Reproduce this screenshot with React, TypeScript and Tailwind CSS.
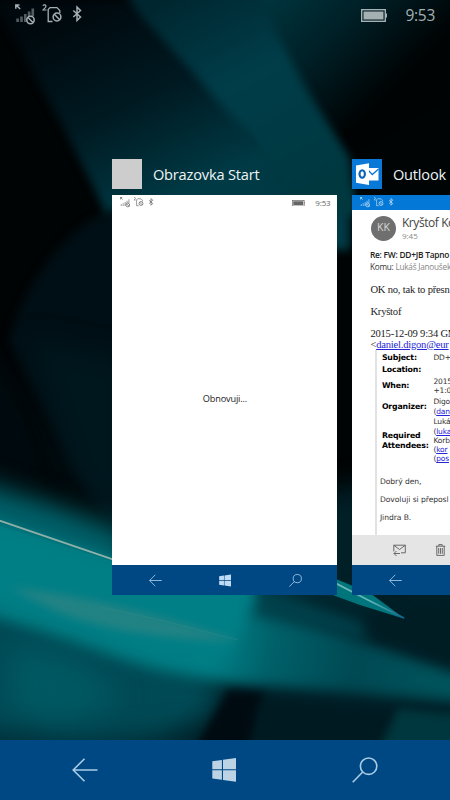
import type { ReactNode } from "react";
import { clsx } from "clsx";

/** Dark teal light-beam wallpaper behind the task switcher. */
function Wallpaper() {
  return (
    <svg
      className="absolute inset-0 h-full w-full"
      viewBox="0 0 450 800"
      preserveAspectRatio="none"
      aria-hidden
    >
      <defs>
        <filter id="b1" x="-20%" y="-20%" width="140%" height="140%" colorInterpolationFilters="sRGB">
          <feGaussianBlur stdDeviation="0.7" />
        </filter>
        <filter id="b4" x="-30%" y="-30%" width="160%" height="160%" colorInterpolationFilters="sRGB">
          <feGaussianBlur stdDeviation="4" />
        </filter>
        <filter id="b7" x="-40%" y="-40%" width="180%" height="180%" colorInterpolationFilters="sRGB">
          <feGaussianBlur stdDeviation="7" />
        </filter>
        <filter id="b12" x="-50%" y="-50%" width="200%" height="200%" colorInterpolationFilters="sRGB">
          <feGaussianBlur stdDeviation="13" />
        </filter>
        <linearGradient id="leftBeam" gradientUnits="userSpaceOnUse" x1="60" y1="20" x2="150" y2="210">
          <stop offset="0" stopColor="#00090e" />
          <stop offset="0.5" stopColor="#001921" />
          <stop offset="1" stopColor="#003a45" />
        </linearGradient>
        <linearGradient id="mainBeam" gradientUnits="userSpaceOnUse" x1="180" y1="-10" x2="290" y2="200">
          <stop offset="0" stopColor="#00262f" />
          <stop offset="0.45" stopColor="#003d49" />
          <stop offset="1" stopColor="#003840" />
        </linearGradient>
        <linearGradient id="topRight" gradientUnits="userSpaceOnUse" x1="260" y1="0" x2="370" y2="110">
          <stop offset="0" stopColor="#00363f" />
          <stop offset="0.5" stopColor="#001f26" />
          <stop offset="1" stopColor="#000304" />
        </linearGradient>
        <linearGradient id="sweep" gradientUnits="userSpaceOnUse" x1="0" y1="560" x2="450" y2="660">
          <stop offset="0" stopColor="#00797f" />
          <stop offset="0.5" stopColor="#007e85" />
          <stop offset="0.62" stopColor="#006069" />
          <stop offset="0.8" stopColor="#004953" />
          <stop offset="1" stopColor="#00545c" />
        </linearGradient>
        <linearGradient id="streak" x1="0" y1="0" x2="1" y2="0">
          <stop offset="0" stopColor="#8cada6" />
          <stop offset="0.6" stopColor="#8db9b0" />
          <stop offset="0.92" stopColor="#5fb5b8" />
          <stop offset="1" stopColor="#0d5f8c" />
        </linearGradient>
      </defs>

      <rect width="450" height="800" fill="#000405" />
      <path d="M225 -30H480V60L330 150Z" fill="url(#topRight)" filter="url(#b7)" />
      <path d="M-5 0H150L262 150L350 190V250H122L95 190L62 125L10 30Z" fill="url(#leftBeam)" filter="url(#b4)" />
      <path d="M110 -30H250L276 32L310 95L350 158L356 215H290L250 140L195 75L140 15Z" fill="url(#mainBeam)" filter="url(#b4)" />

      {/* curved pane on the left, above the bright sweep */}
      <path d="M-30 380L5 350L45 420L75 480L-30 500Z" fill="#00090d" filter="url(#b12)" />
      <path d="M125 207C80 213 30 270 8 340L40 400L75 470L120 530Z" fill="#000f15" filter="url(#b4)" />
      <path d="M30 340L130 360V540L75 480Z" fill="#00171e" filter="url(#b12)" />

      {/* lower right shade */}
      <path d="M325 490L480 470V780H170L260 590Z" fill="#001f27" filter="url(#b12)" />

      {/* bright sweep, widest on the left */}
      <path d="M-40 476L60 506L130 534V600L-40 640Z" fill="#00616a" filter="url(#b12)" />
      <path d="M-40 590L100 630L225 676L215 715L150 760L-40 780Z" fill="#004a55" filter="url(#b12)" />
      <path
        d="M-20 518L112 561L258 588L280 610L360 640L465 676V702C400 697 310 689 250 685C190 680 150 670 100 652L-20 612Z"
        fill="url(#sweep)"
        filter="url(#b7)"
      />
      <path d="M-20 520L112 563L258 588L228 655L150 646L-20 595Z" fill="#007f86" filter="url(#b7)" />
      <path d="M-20 520L112 561V600L-20 570Z" fill="#007f85" filter="url(#b1)" opacity="0.7" />
      <path d="M10 650C60 645 90 665 120 700L60 725L10 710Z" fill="#005862" filter="url(#b12)" />
      <path d="M-30 728L80 742L200 730V780H-30Z" fill="#002d37" filter="url(#b12)" />
      <path d="M228 690L264 693L250 760H188Z" fill="#000b11" filter="url(#b4)" />
      <path d="M262 699L450 716V760H248Z" fill="#001a21" filter="url(#b7)" />
      <path d="M398 708L470 716V760H374Z" fill="#00363d" filter="url(#b4)" />
      <path d="M262 588L350 590L380 616L365 640L252 616Z" fill="#00414b" filter="url(#b7)" />
      <path d="M272 590L335 592L400 614L440 652L365 624Z" fill="#002129" filter="url(#b7)" />
      <path d="M366 612L470 600V668L365 634Z" fill="#001d24" filter="url(#b7)" />

      {/* soft grey reflection */}
      <path d="M10 588C70 592 150 612 240 641C170 641 90 628 52 609Z" fill="#3a8582" opacity="0.6" filter="url(#b4)" />
      <path d="M100 607L160 620L238 640" fill="none" stroke="#4b8f8b" strokeWidth="1.200" opacity="0.25" filter="url(#b1)" />

      {/* thin white edge */}
      <path d="M336 579L370 593L405 619L360 605L330 594Z" fill="#00757b" filter="url(#b1)" />
      <path d="M-5 519L112 559L230 572L337 584L368 600L404 618" fill="none" stroke="url(#streak)" strokeWidth="1.800" filter="url(#b1)" />
    </svg>
  );
}

function StatusIcons({ className }: { className?: string }) {
  return (
    <svg className={className} viewBox="0 0 72 26" fill="none" stroke="currentColor" aria-hidden>
      {/* signal with roaming arrow */}
      <path d="M0.800 4.800V0.900H4.500M1 1L5.200 5" strokeWidth="1.500" />
      <g fill="currentColor" stroke="none" opacity="0.5">
        <rect x="1.300" y="14.500" width="2.600" height="3.500" />
        <rect x="5.200" y="12.500" width="2.600" height="5.500" />
        <rect x="9" y="10" width="2.600" height="8" />
        <rect x="12.800" y="7.500" width="2.600" height="4.500" />
        <rect x="16.500" y="4.500" width="2.600" height="7.500" />
      </g>
      <circle cx="15.500" cy="16" r="3.700" strokeWidth="1.500" />
      <path d="M13 13.500L18 18.500" strokeWidth="1.500" />
      {/* second sim slot */}
      <path d="M37.500 17.500H33.200V5.500L35 3.600H42L44.800 6.500V9" strokeWidth="1.300" />
      <circle cx="42" cy="13" r="3.900" strokeWidth="1.500" />
      <path d="M39.300 10.300L44.700 15.700" strokeWidth="1.500" />
      {/* sim number */}
      <path d="M28 1.800C28.500 0.400 31.300 0.600 30.900 2.600C30.600 3.800 28.800 4.800 28 6H31.500" strokeWidth="1.200" />
      {/* bluetooth */}
      <path d="M58.300 6.500L65.500 13L62 16.500V3L65.500 6.500L58.300 13" strokeWidth="1.500" />
    </svg>
  );
}

function Battery({ className }: { className?: string }) {
  return (
    <svg className={className} viewBox="0 0 26 13" aria-hidden>
      <rect x="0.700" y="0.700" width="23.600" height="11.600" fill="none" stroke="currentColor" strokeWidth="1.400" />
      <rect x="2.500" y="2.500" width="20" height="8" fill="currentColor" />
      <rect x="25" y="4.500" width="1" height="4" fill="currentColor" />
    </svg>
  );
}

function BackIcon({ className }: { className?: string }) {
  return (
    <svg className={className} viewBox="0 0 26 26" fill="none" stroke="currentColor" strokeWidth="1.600" aria-hidden>
      <path d="M12.500 1.700L1.200 13L12.500 24.300M1.200 13H25.500" />
    </svg>
  );
}

function WindowsIcon({ className }: { className?: string }) {
  return (
    <svg className={className} viewBox="0 0 26 26" fill="currentColor" aria-hidden>
      <path d="M0.300 4.300L9.900 3V12.200H0.300ZM11 2.800L24 1V12.200H11ZM0.300 13.300H9.900V22.800L0.300 21.500ZM11 13.300H24V24.800L11 23Z" />
    </svg>
  );
}

function SearchIcon({ className }: { className?: string }) {
  return (
    <svg className={className} viewBox="0 0 26 26" fill="none" stroke="currentColor" strokeWidth="1.600" aria-hidden>
      <circle cx="16.600" cy="9.200" r="8.200" />
      <path d="M10.700 15L0.700 25.300" />
    </svg>
  );
}

function ThumbNav() {
  return (
    <div className="flex h-[30px] shrink-0 items-center justify-between bg-[#004883] pr-[35px] pl-[36.500px] text-[#b4d4ec]">
      <BackIcon className="h-[13px] w-[13px]" />
      <WindowsIcon className="h-[13px] w-[13px] text-[#c0dcf5]" />
      <SearchIcon className="h-[13px] w-[13px]" />
    </div>
  );
}

function AppCard({
  title,
  icon,
  statusClass,
  children,
}: {
  title: string;
  icon: ReactNode;
  statusClass: string;
  children: ReactNode;
}) {
  return (
    <section className="w-[225px] shrink-0">
      <header className="flex h-[30px] items-center">
        {icon}
        <h2 className="ml-[10.500px] pt-px text-[14.600px] tracking-[-0.180px] whitespace-nowrap text-[#edf5f6]">{title}</h2>
      </header>
      <div className="mt-1.5 flex h-[400px] flex-col overflow-hidden bg-white">
        <div className={clsx("flex h-[15px] shrink-0 items-start pt-[2px] pr-[7px] pl-2", statusClass)}>
          <StatusIcons className="h-[13px] w-9" />
          <Battery className="mt-[2.500px] ml-auto h-[6.500px] w-[13px]" />
          <span className="ml-[10px] text-[8px] leading-[12px] tracking-[-0.200px]">9:53</span>
        </div>
        {children}
        <ThumbNav />
      </div>
    </section>
  );
}

function OutlookLogo() {
  return (
    <svg className="h-[30px] w-[30px] bg-[#0a78d6]" viewBox="0 0 30 30" aria-hidden>
      <path d="M16 9H26.500V21.500H16Z" fill="#fff" />
      <path d="M16 11L20.300 15.500L26.500 10" fill="none" stroke="#0a78d6" strokeWidth="1.300" />
      <path d="M4 6.500L17 4.200V26L4 23.700Z" fill="#fff" />
      <ellipse cx="10.200" cy="15" rx="2.700" ry="3.700" fill="none" stroke="#0a63b5" strokeWidth="2.100" />
    </svg>
  );
}

function Link({ children }: { children: ReactNode }) {
  return <span className="text-[#2525d8] underline">{children}</span>;
}

function InviteRow({ label, className, children }: { label: ReactNode; className: string; children?: ReactNode }) {
  return (
    <div className={clsx("flex items-center", className)}>
      <div className="w-[51.500px] shrink-0 font-bold tracking-[-0.150px] text-black">{label}</div>
      <div className="text-[7.500px] tracking-[-0.150px] whitespace-nowrap">{children}</div>
    </div>
  );
}

function MailMessage() {
  return (
    <div className="flex min-h-0 flex-1 flex-col whitespace-nowrap">
      <div className="flex h-[35px] shrink-0 items-center pt-px pl-[18.500px]">
        <div className="flex h-[25px] w-[25px] items-center justify-center rounded-full bg-[#6f6f6f] text-[10.500px] text-[#dadada]">
          KK
        </div>
        <div className="ml-[6px]">
          <div className="text-[12px] leading-[16px] tracking-[-0.420px] text-[#444]">Kryštof Ko</div>
          <div className="text-[8px] leading-[10px] text-[#8a8a8a]">9:45</div>
        </div>
      </div>
      <div className="mt-[3.500px] pl-[17.500px] text-[8.400px] leading-[12px]">
        <div className="font-semibold tracking-[-0.250px] text-[#222]">Re: FW: DD+JB Tapno</div>
        <div className="text-[8.200px] tracking-[-0.220px] text-[#333]">
          Komu: <span className="text-[#868686]">Lukáš Janoušek</span>
        </div>
      </div>
      <div className="mt-[11.500px] pl-[18px] font-['Liberation_Serif',serif] text-[10.600px] leading-[11px] tracking-[-0.220px] text-[#222]">
        <p>OK no, tak to přesn</p>
        <p className="mt-[11px]">Kryštof</p>
        <p className="mt-[11px]">2015-12-09 9:34 GM</p>
        <p>
          &lt;<Link>daniel.digon@eur</Link>
        </p>
      </div>
      <div className="ml-[22.500px] min-h-0 flex-1 overflow-hidden border-l-2 border-[#e2e2e2] pt-[1.500px] pl-[5px] font-['DejaVu_Sans',sans-serif] text-[7.800px] leading-[9.200px] text-[#333]">
        <InviteRow label="Subject:" className="h-[13px]">DD+</InviteRow>
        <InviteRow label="Location:" className="h-[11px]" />
        <InviteRow label="When:" className="h-[21px]">
          2015
          <br />
          +1:0
        </InviteRow>
        <InviteRow label="Organizer:" className="h-[20px]">
          Digo
          <br />(<Link>dan</Link>
        </InviteRow>
        <InviteRow
          label={
            <>
              Required
              <br />
              Attendees:
            </>
          }
          className="h-[48px]"
        >
          Luká
          <br />(<Link>luka</Link>
          <br />
          Korb
          <br />(<Link>kor</Link>
          <br />(<Link>pos</Link>
        </InviteRow>
        <div className="-ml-[2px] pt-[8px] text-[7.600px] leading-[18.200px] tracking-[-0.050px]">
          <p>Dobrý den,</p>
          <p>Dovoluji si přeposl</p>
          <p>Jindra B.</p>
        </div>
      </div>
      <div className="flex h-[30px] shrink-0 items-center gap-[29.500px] bg-[#e5e5e5] pl-[40.500px] text-[#5c5c5c]">
        <svg className="h-3 w-[13px]" viewBox="0 0 13 12" fill="none" stroke="currentColor" strokeWidth="0.900" aria-hidden>
          <path d="M0.800 7.500V1.200H12.300V8.800H8M0.800 1.200L6.500 5.500L12.300 1.200M7 9.500H1M3.500 7L1 9.500L3.500 12" />
        </svg>
        <svg className="h-3 w-[11px]" viewBox="0 0 11 12" fill="none" stroke="currentColor" strokeWidth="0.900" aria-hidden>
          <path d="M0.800 2.200H10.200M3.800 2V0.600H7.200V2M1.800 2.200V11.400H9.200V2.200M3.700 4V9.800M5.500 4V9.800M7.300 4V9.800" />
        </svg>
      </div>
    </div>
  );
}

export default function App() {
  return (
    <main className="relative h-[800px] w-[450px] overflow-hidden bg-black font-['Open_Sans','Noto_Sans',sans-serif]">
      <Wallpaper />
      <div className="relative flex h-full flex-col">
        <div className="flex h-[159px] shrink-0 items-start pt-1 pr-[15px] pl-[15px] text-[#a5b0b3]">
          <StatusIcons className="h-[26px] w-[72px]" />
          <Battery className="mt-[4.500px] ml-auto h-[13px] w-[26px]" />
          <span className="ml-[19px] text-[15.500px] leading-[22px] tracking-[-0.300px]">9:53</span>
        </div>

        <div className="flex flex-1 gap-[15px] overflow-hidden pl-[112.400px]">
          <AppCard
            title="Obrazovka Start"
            icon={<div className="h-[30px] w-[30px] bg-[#cdcdcd]" />}
            statusClass="text-[#666]"
          >
            <div className="flex flex-1 items-center justify-center pt-[22px] text-[9.200px] tracking-[-0.150px] text-[#222]">
              Obnovuji...
            </div>
          </AppCard>
          <AppCard title="Outlook" icon={<OutlookLogo />} statusClass="bg-[#0478d7] text-[#c8e4fb]">
            <MailMessage />
          </AppCard>
        </div>

        <nav className="flex h-[60px] shrink-0 items-center justify-between bg-[#004883] px-[72px] text-[#a9cbe5]">
          <BackIcon className="h-[26px] w-[26px]" />
          <WindowsIcon className="h-[26px] w-[26px] text-[#bcd3e6]" />
          <SearchIcon className="h-[26px] w-[26px]" />
        </nav>
      </div>
    </main>
  );
}
